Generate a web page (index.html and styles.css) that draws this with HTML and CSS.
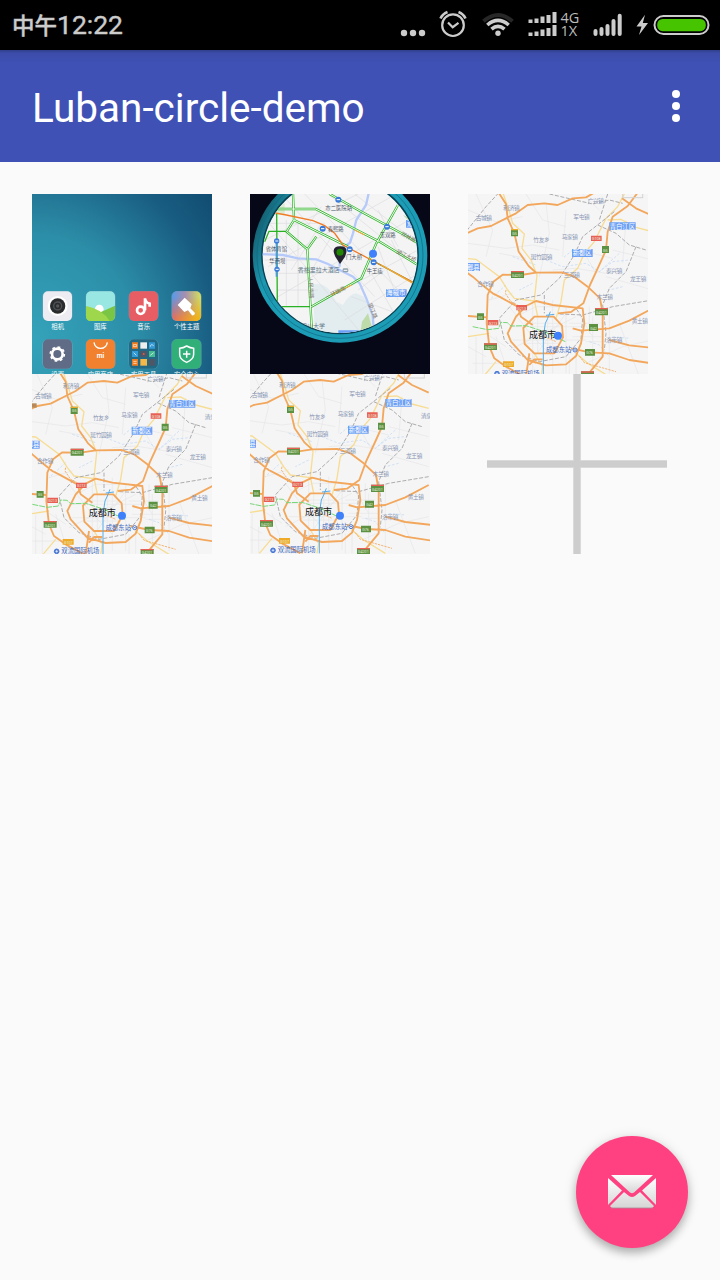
FILE: index.html
```
<!DOCTYPE html>
<html lang="zh-CN">
<head>
<meta charset="utf-8">
<title>Luban-circle-demo</title>
<link rel="stylesheet" href="styles.css">
</head>
<body>
<svg class="defs" width="0" height="0" aria-hidden="true">
  <defs>
    <g id="city">
      <g class="street">
        <path d="M6 60L90 95 170 80M30 12L80 120 60 200M180 12L230 90 300 110M240 40L250 130 220 260M300 60L290 200M6 160L120 175 200 165 280 180M260 240L330 235 420 250M440 180L560 210M480 90L470 220M420 260L560 300M70 330L140 310M60 430L120 470M6 470L60 500M20 520H120M30 440V560M50 480V560M90 440L130 560M130 350L200 440 260 500M130 480L330 380M170 550L300 370M130 410H350M200 330V550M260 330V550M300 350V550M140 450H360M380 380V550M430 350V550M360 520L470 470 560 450M460 400L520 560M400 60L350 12M380 190L440 205M350 180L390 250M100 190L180 205M310 400H400M320 440H410M340 375L380 440"/>
        <path d="M215 380V490M245 380V490M175 400H285M175 460H285M150 380L210 350 310 350M145 470L190 520M310 500V560M330 490V560M360 455H410M370 350V430"/>
      </g>
      <g class="river"><path d="M240 210L290 230 360 220 400 245 440 215 490 210M120 285L70 330M140 200L210 225M470 290L430 300M370 455L400 465 430 500M440 440L490 445M320 180L290 205M200 280L160 300M460 190L400 245"/></g>
      <g class="yellow">
        <path d="M-8 205L30 208 60 230 100 260 125 300 145 325 205 333M112 12L130 65 140 100 175 132 168 175 195 210 213 255 205 330 215 380M475 12L455 50 420 85 400 125 385 155 355 190 335 235 295 270 285 335 270 385M425 90L465 88 510 112 560 125M6 440L70 430M345 460L330 490 365 520 430 560M52 560L90 515M205 490L230 530 225 560M180 505L210 520"/>
      </g>
      <g class="rail">
        <path d="M-8 135L60 50 95 12M250 12L380 42 430 30 470 40M445 65L350 140 325 195 280 265 225 315 150 330 100 385 115 450 160 495 220 515 300 500 345 445 350 385 330 355M395 105L450 130 490 165 540 180M510 170L480 245 430 295 410 345 420 430 415 480M560 330L440 350 350 375 280 372M235 315V370M425 12L400 90"/>
      </g>
      <g class="road">
        <path d="M-8 135L35 115 75 108 120 85 150 70 185 45 235 40 275 45 320 25 360 22 385 8M98 8L120 42 125 85 145 130 158 185 188 228 210 248M515 8L485 48 440 80 425 125 420 180 402 220 372 285 352 340 315 366 276 370M468 25L510 55 560 78"/>
        <path d="M210 248L165 255 110 254 82 275 65 315 62 400 70 470 85 505 120 530 175 560M210 248L288 247 325 260 365 290 402 325 410 370 410 500 360 560M-8 240L20 260 50 286 80 310 100 320 155 350 165 380 200 405M-8 377L62 382M320 415L345 422 430 415 490 392 560 355M315 475L372 487 430 490 490 510 570 522M430 450L490 466 570 475"/>
        <path d="M210 333L260 345 350 355 355 400 345 460 330 498 300 523 240 526 185 510 135 455 125 430 150 380 180 348ZM205 380H263L288 407 291 442 265 490H205L176 462 172 414ZM190 490L180 560M190 525L205 508H230"/>
        <path class="dash" d="M120 300L118 310 135 335 155 345M235 440L270 455M340 498L355 518 450 545"/>
      </g>
      <path class="green" d="M20 410L65 419 98 415 105 397 124 398 135 408 180 407 235 425 298 455"/>
      <path class="blue" d="M232 440V560M232 440L238 400 245 385 253 365M240 376L265 373"/>
      <g class="place">
        <text x="365" y="39">广兴镇</text><text x="112" y="60">利济镇</text><text x="29" y="90">古城镇</text><text x="322" y="87">军屯镇</text><text x="202" y="156">竹友乡</text><text x="287" y="148">马家镇</text><text x="194" y="208">斑竹园镇</text><text x="293" y="260">三河镇</text><text x="420" y="250">泰兴镇</text><text x="492" y="273">龙王镇</text><text x="392" y="327">木兰镇</text><text x="34" y="287">合作镇</text><text x="497" y="398">黄土镇</text><text x="420" y="456">洛带镇</text>
      </g>
      <g class="district">
        <path d="M430 97h79v23h-79zM318 177h62v24h-62zM-16 219h58v24h-58z"/>
        <text x="431" y="116">青白江区</text><text x="320" y="196">新都区</text><text x="3" y="239">郫县</text>
      </g>
      <g class="g-sign">
        <path d="M135 117h21v22h-21zM408 168h21v21h-21zM135 243h39v21h-39zM387 354h39v22h-39zM33 370h21v20H33zM54 460h39v20H54zM369 402h27v21h-27zM357 477h30v20h-30zM345 544h39v22h-39z"/>
        <path class="red" d="M135 243h39v4h-39zM387 354h39v4h-39zM54 460h39v4H54zM345 544h39v4h-39zM375 137h32v16h-32zM151 345h32v16h-32zM65 390h32v16H65z"/>
        <path class="amber" d="M111 514h33v17h-33zM135 117h21v4h-21z"/>
        <text x="139" y="134">G5</text><text x="411" y="185">G5</text><text x="138" y="260">G4201</text><text x="390" y="372">G4201</text><text x="36" y="386">G5</text><text x="57" y="477">G4201</text><text x="373" y="419">G42</text><text x="361" y="493">G76</text><text x="348" y="560">G4201</text><text x="378" y="151">G108</text><text x="154" y="359">G213</text><text x="68" y="404">G213</text><text x="115" y="528">G107</text>
      </g>
      <g class="station">
        <text x="240" y="486">成都东站</text><circle cx="327" cy="480" r="6"/><path d="M324 480h6"/>
        <text x="107" y="557">双流国际机场</text><circle class="fill" cx="93" cy="551" r="7"/><path class="white" d="M93 547v8M89 551h8"/>
      </g>
      <text class="capital" x="189" y="445">成都市</text>
    </g>
    <linearGradient id="paper" x2="0" y2="1"><stop stop-color="#fff"/><stop offset="1" stop-color="#d5d5d5"/></linearGradient>
    <linearGradient id="theme"><stop stop-color="#579be9"/><stop offset=".45" stop-color="#a58eb0"/><stop offset="1" stop-color="#d5df5c"/></linearGradient>
    <linearGradient id="themeWarm" x2="1" y2=".2"><stop stop-color="#d95e76"/><stop offset="1" stop-color="#efb31a"/></linearGradient>
    <linearGradient id="fadeDown" x2="0" y2="1"><stop offset=".2" stop-color="#000"/><stop offset=".9" stop-color="#fff"/></linearGradient>
    <mask id="warmMask"><rect x="425" y="303" width="90" height="90" fill="url(#fadeDown)"/></mask>
    <clipPath id="lens"><circle cx="276" cy="197" r="232"/></clipPath>
    <linearGradient id="rim" x1="0" y1="0" x2=".7" y2=".3"><stop stop-color="#06242f"/><stop offset=".2" stop-color="#176d80"/><stop offset=".4" stop-color="#1d9cb5"/></linearGradient>
  </defs>
</svg>

<header class="status">
  <div class="clock"><span class="noon">中午</span>12:22</div>
  <div class="indicators">
    <svg class="more" width="26" height="50" viewBox="400 0 26 50"><g fill="#ccc"><circle cx="404" cy="33" r="3.2"/><circle cx="413" cy="33" r="3.2"/><circle cx="422" cy="33" r="3.2"/></g></svg>
    <svg class="alarm" width="28" height="50" viewBox="438.500 0 28 50" fill="none" stroke="#ccc" stroke-width="2.200"><circle cx="452.500" cy="25.200" r="10.800"/><path d="M447.500 22.500L452.200 27.200 458 22.800"/><path d="M440 18.500Q442 14 447 12M465 18.500Q463 14 458 12" stroke-width="2.600"/></svg>
    <svg class="wifi" width="32" height="50" viewBox="481.500 0 32 50" fill="none" stroke="#ccc" stroke-width="3.600"><path d="M483 21.300Q497.500 8.700 512 21.300" stroke="#272727" stroke-width="4"/><path d="M486.800 25Q497.500 15.800 508.200 25M491 29.200Q497.500 23.400 504 29.200"/><circle cx="497.500" cy="33.200" r="2.700" fill="#ccc" stroke="none"/></svg>
    <svg class="net" width="52" height="50" viewBox="527.500 0 52 50"><g stroke="#ccc" stroke-width="4"><path d="M530 19.500V23M536 18.500V23M542 16.500V23M548 15V23M554 12V23M530 32.500V36M536 31.500V36M542 29.500V36M548 28V36M554 25V36"/></g><text x="560" y="23">4G</text><text x="560" y="36">1X</text></svg>
    <svg class="signal" width="29" height="50" viewBox="592.500 0 29 50"><path d="M595 31v3M601 29v5M607 26v8M613 21v13M619.200 15.800V34" stroke="#ccc" stroke-width="4" stroke-linecap="round"/></svg>
    <svg class="power" width="74" height="50" viewBox="635.500 0 74 50"><path d="M644.500 14.800L636 26.500h5L638.500 35 647.500 23h-5.200z" fill="#ccc"/><rect x="654" y="16" width="54" height="18" rx="9" fill="none" stroke="#ccc" stroke-width="2"/><rect x="656.700" y="19" width="48.600" height="12.200" rx="5.500" fill="#47c400"/></svg>
  </div>
</header>

<div class="toolbar">
  <h1>Luban-circle-demo</h1>
  <svg class="menu" width="8" height="34" viewBox="0 0 8 34" fill="#fff"><circle cx="4" cy="5" r="4"/><circle cx="4" cy="17" r="4"/><circle cx="4" cy="29" r="4"/></svg>
</div>

<main class="gallery">
  <div class="tile home">
    <svg viewBox="6 12 540 540">
      <g class="app-frame"><rect x="37" y="303" width="91" height="90" rx="17"/><rect x="167" y="303" width="90" height="90" rx="17"/><rect x="296" y="303" width="90" height="90" rx="17"/><rect x="424" y="303" width="91" height="90" rx="17"/></g>
      <rect x="39" y="304" width="87" height="89" rx="15" fill="#ececf2"/><circle cx="83" cy="348" r="30" fill="#fff"/><circle cx="83" cy="348" r="23" fill="#292b2e"/><circle cx="83" cy="348" r="12" fill="none" stroke="#505254" stroke-width="4"/><circle cx="83" cy="348" r="5" fill="#555"/>
      <rect x="168" y="304" width="87" height="89" rx="15" fill="#98e7e3"/><circle cx="208" cy="357" r="13" fill="#fff"/><path d="M208 368L255 347V378Q255 393 240 393H183Q168 393 168 378V350Z" fill="#7ac543"/><path d="M168 348Q219 358 239 393H183Q168 393 168 378Z" fill="#9ed64c"/>
      <rect x="297" y="304" width="87" height="89" rx="15" fill="#e65d63"/><g fill="none" stroke="#fff" stroke-width="8"><circle cx="332" cy="361" r="11"/><path d="M345 361V325Q347 338 359 341V350"/></g>
      <rect x="426" y="304" width="87" height="89" rx="15" fill="url(#theme)"/><rect x="426" y="304" width="87" height="89" rx="15" fill="url(#themeWarm)" mask="url(#warmMask)"/><path d="M443 345L464 323 485 343 481 355 495 369Q494 378 486 376L474 361 463 366Z" fill="#fff"/>
      <g class="app-frame"><rect x="37" y="447" width="91" height="90" rx="17"/><rect x="167" y="447" width="90" height="90" rx="17"/><rect x="296" y="447" width="90" height="90" rx="17"/><rect x="424" y="447" width="91" height="90" rx="17"/></g>
      <rect x="39" y="448" width="87" height="88" rx="15" fill="#606b86"/><circle cx="82" cy="492" r="16" fill="none" stroke="#fff" stroke-width="8"/><circle cx="82" cy="492" r="21" fill="none" stroke="#fff" stroke-width="5" stroke-dasharray="8.250 8.250"/>
      <rect x="168" y="448" width="87" height="88" rx="15" fill="#f1802f"/><path d="M192 457Q195 475 212 475T232 457" fill="none" stroke="#fff" stroke-width="4"/><text class="mi" x="200" y="503">mi</text>
      <rect x="297" y="448" width="87" height="88" rx="15" fill="#216984"/>
      <path fill="#ef7c20" d="M306 457h18v19h-18zM306 507h18v20h-18z"/><path fill="#eee" d="M331 457h20v19h-20z"/><path fill="#339bd8" d="M357 457h18v19h-18zM306 483h18v18h-18z"/><path fill="#4f5666" d="M331 483h20v18h-20zM357 507h18v20h-18z"/><path fill="#47bb92" d="M357 483h18v18h-18z"/><path fill="#f5b848" d="M331 507h20v20h-20z"/>
      <path d="M310 464h10v6h-10zM361 470q1-10 10-3M310 514h10M310 520h10M311 488l8 8M361 496l10-8" fill="none" stroke="#fff" stroke-width="2"/><circle cx="341" cy="492" r="3" fill="#df5a4b"/>
      <rect x="426" y="448" width="87" height="88" rx="15" fill="#31af79"/><path d="M470 468Q481 474 491 475V493Q491 509 470 517 449 509 449 493V475Q460 474 470 468ZM470 482V503M459 492H481" fill="none" stroke="#fff" stroke-width="4.500"/>
      <g class="app-name"><text x="83" y="417">相机</text><text x="211" y="417">图库</text><text x="341" y="417">音乐</text><text x="470" y="417">个性主题</text><text x="83" y="560">设置</text><text x="211" y="560">应用商店</text><text x="341" y="560">实用工具</text><text x="470" y="560">安全中心</text></g>
    </svg>
  </div>

  <div class="tile lens">
    <svg viewBox="6 12 540 540">
      <circle cx="276" cy="196" r="246" fill="#f4f4f4" stroke="url(#rim)" stroke-width="32"/>
      <circle cx="276" cy="196" r="249" fill="none" stroke="#0f6580" stroke-width="2"/><circle cx="276" cy="196" r="234" fill="none" stroke="#094153" stroke-width="5"/>
      <path d="M50 285A244 244 0 0 0 75 333" fill="none" stroke="#1b8fa8" stroke-width="7"/>
      <g clip-path="url(#lens)">
        <rect x="40" y="0" width="480" height="440" fill="#f4f4f5"/>
        <path d="M195 283Q220 275 245 300L265 335 285 345Q305 310 325 310L348 320 372 370 378 430H200Z" fill="#e3ecef"/>
        <path d="M337 430L342 395 360 370 377 430ZM465 75L510 95 500 110Z" fill="#bddcaa"/><path d="M80 40h30v35H80z" fill="#dceacf"/>
        <g fill="none" stroke="#dcdce0" stroke-width="2"><path d="M50 150L330 12M60 230L430 20M90 320L500 80M200 345L510 180M290 390L510 250M100 12L380 320M170 12L500 350M240 12L510 230M320 12L510 160M30 60L340 430M50 210H180M80 250H220M90 300H210M115 90V350M150 100V350M60 100H230M220 100L130 240M250 140L180 260M390 170L450 330M430 150L490 270M370 250L450 390M310 320L500 390M390 60L450 170M220 50L170 120M330 300L410 240"/></g>
        <path d="M30 192L105 195 150 205 205 208 240 222 275 240 315 260 335 280 355 325 374 375 378 430M362 10L354 45 325 90 315 130 306 158 275 180V230" fill="none" stroke="#b6cafa" stroke-width="7"/>
        <path d="M85 57H203L395 155 510 225M135 12L138 90 300 170M138 90L116 125 178 178 205 140M450 45L385 160 340 265 190 350M178 178L192 430M245 12L340 65 470 135 510 160" fill="none" stroke="#29b324" stroke-width="7"/>
        <path d="M50 155L63 124H116M86 70L88 350H190M370 210L500 280" fill="none" stroke="#29b324" stroke-width="4"/>
        <path d="M85 57H203L395 155 510 225M135 12L138 90 300 170M138 90L116 125 178 178 205 140M450 45L385 160 340 265 190 350M178 178L192 430M245 12L340 65 470 135 510 160" fill="none" stroke="#f8fff5" stroke-width="3"/>
        <path d="M86 150V260" stroke="#4b9bd8" stroke-width="6"/><path d="M60 65L115 75 195 92 230 107 260 130 285 165 370 210 510 285" fill="none" stroke="#f17b25" stroke-width="4"/><path d="M320 120L350 135M250 315L310 285M400 225L500 283" stroke="#edab3b" stroke-width="4"/>
        <g class="poi"><text x="232" y="59">市二医院站</text><text x="239" y="122">春熙路</text><text x="395" y="140">玉双路</text><text x="53" y="182">省体育馆</text><text x="64" y="218">华西坝</text><text x="294" y="208">门大桥</text><text x="356" y="248">牛王庙</text><text class="hotel" x="149" y="247">香格里拉大酒店</text><text class="hotel" x="159" y="413">四川大学</text><g class="street-name"><text transform="translate(181 262) rotate(86)">人民南路</text><text transform="translate(237 327) rotate(-27)">一环路南</text><text transform="translate(458 135) rotate(28)">双林路</text><text transform="translate(444 188) rotate(26)">望江大桥</text><text transform="translate(360 342) rotate(68)">望江路</text></g></g>
        <g class="district"><path d="M414 298h62v23h-62zM474 90h36v23h-36zM271 421h64v20h-64z"/><text x="415" y="316">海椒市</text><text x="477" y="108">双</text></g>
        <g fill="#397bd9"><circle cx="271" cy="29" r="9"/><circle cx="224" cy="116" r="9"/><circle cx="417" cy="110" r="9"/><circle cx="305" cy="178" r="9"/><circle cx="377" cy="217" r="9"/><circle cx="86" cy="153" r="8"/><circle cx="87" cy="238" r="8"/></g><path d="M266 29h10M219 116h10M412 110h10M300 178h10M372 217h10M82 153h9M83 238h9" stroke="#fff" stroke-width="3"/>
        <rect x="284" y="235" width="17" height="12" rx="4" fill="#8fa1aa"/><path d="M287 241h11" stroke="#fff" stroke-width="3"/>
      </g>
      <circle cx="375" cy="191" r="12" fill="#3e81fb"/><path d="M276 222L262 200Q247 170 276 169T291 200Z" fill="#242431"/><circle cx="276" cy="187" r="10.500" fill="#208600"/>
    </svg>
  </div>

  <div class="tile map"><svg viewBox="6 12 540 540"><use href="#city"/><rect class="scale" x="470" y="0" width="60" height="23"/><circle class="here" cx="276" cy="437" r="12"/></svg></div>
  <div class="tile map"><svg viewBox="6 6 540 540"><use href="#city" x="-13" y="-13"/><rect class="scale" x="469" y="-5" width="60" height="23"/><text class="place" x="524" y="140">清泉</text><path d="M6 94h14v13H6z" fill="#b98a57"/><circle class="here" cx="276" cy="431" r="12"/></svg></div>
  <div class="tile map"><svg viewBox="6 6 540 540"><use href="#city" x="-18" y="-16"/><rect class="scale" x="469" y="-5" width="60" height="23"/><text class="place" x="519" y="138">清泉</text><circle class="here" cx="276" cy="431" r="12"/></svg></div>
  <div class="tile add"><svg viewBox="0 0 180 180"><path d="M0 90H180M90 0V180" stroke="#dedede" stroke-width="8"/><path d="M0 90H180M90 0V180" stroke="#cdcdcd" stroke-width="6.400"/></svg></div>
</main>

<button class="fab" aria-label="发送邮件">
  <svg width="48" height="34" viewBox="0 0 48 34"><g fill="url(#paper)"><path d="M3 0H45L26 17.500Q24 19 22 17.500Z"/><path d="M0 3L14 15.500 0 30ZM48 3L34 15.500 48 30ZM16 17L21 21Q24 23 27 21L32 17 46 31Q45 33 43 33H5Q3 33 2 31Z"/></g><path d="M3 33H45" stroke="#a88b95" stroke-width=".8"/></svg>
</button>
</body>
</html>
```
FILE: styles.css
```
* { box-sizing: border-box; }
body {
  margin: 0;
  position: relative;
  height: 1280px;
  overflow: hidden;
  background: #fafafa;
  font-family: Roboto, "Noto Sans CJK SC", sans-serif;
}
svg { display: block; }
.defs { position: absolute; }

.status {
  height: 50px;
  padding: 0 10.5px 0 12px;
  background: #000;
  color: #ccc;
  display: flex;
  justify-content: space-between;
}
.clock {
  font-size: 26.5px;
  line-height: 50px;
  white-space: nowrap;
  -webkit-text-stroke: .4px #ccc;
}
.noon { font-size: 22.5px; font-weight: 500; }
.indicators { display: flex; }
.alarm { margin-left: 12.5px; }
.wifi { margin-left: 15px; }
.net { margin-left: 14px; }
.signal { margin-left: 13px; }
.power { margin-left: 14px; }
.net text { fill: #bbb; font: 14.5px "Open Sans", sans-serif; }

.toolbar {
  height: 112px;
  padding: 0 40px 0 32px;
  display: flex;
  align-items: center;
  justify-content: space-between;
  background: linear-gradient(#303e8b, #3b4ca9 3px, #3f51b5 14px);
}
.toolbar h1 {
  margin: 4px 0 0;
  color: #fff;
  font-size: 40.5px;
  font-weight: 400;
}

.gallery {
  padding: 32px 32px 0;
  display: grid;
  grid-template-columns: repeat(3, 180px);
  column-gap: 38px;
}
.tile { width: 180px; height: 180px; overflow: hidden; }
.tile svg { width: 180px; height: 180px; }
.home {
  background: radial-gradient(circle at 0 80%, #34a3ba 0, #2c8ea8 45%, rgba(27, 98, 134, .8) 80%, transparent 115%), linear-gradient(75deg, #24607f, #104b75 60%, #0c3f65);
}
.lens { background: #070817; }
.map { background: #f5f5f5; }
.add { margin-left: 19px; }

.app-frame { fill: #7ea7bd; opacity: .6; }
.app-name { fill: #fff; font: 19px "Noto Sans CJK SC", sans-serif; text-anchor: middle; }
.mi { fill: #fff; font: bold 20px Roboto, sans-serif; }

.street, .river, .yellow, .rail, .road, .green, .blue { fill: none; }
.street { stroke: #e5e5e8; stroke-width: 2; }
.river { stroke: #bed6f6; stroke-width: 2; stroke-dasharray: 8 5; }
.yellow { stroke: #f7dc94; stroke-width: 4; }
.rail { stroke: #adadb0; stroke-width: 3; stroke-dasharray: 12 5; }
.road { stroke: #f2a75c; stroke-width: 5.5; stroke-linejoin: round; }
.road .dash { stroke-width: 2.5; stroke-dasharray: 7 3; }
.green { stroke: #79d677; stroke-width: 3; stroke-dasharray: 18 3; }
.blue { stroke: #55adec; stroke-width: 3; }
.place { fill: #8694b3; font: 17px "Noto Sans CJK SC", sans-serif; letter-spacing: -1px; }
.district path { fill: #6b9ff5; }
.district text { fill: #fff; font: 19px "Noto Sans CJK SC", sans-serif; }
.g-sign path { fill: #5b9141; }
.g-sign .red { fill: #e95f55; }
.g-sign .amber { fill: #efaa28; }
.g-sign text { fill: #e7f2dd; font: 11px Roboto, sans-serif; }
.station text { fill: #4169bd; font: 19px "Noto Sans CJK SC", sans-serif; }
.station circle { fill: #fff; stroke: #4878d7; stroke-width: 3; }
.station path { fill: none; stroke: #4878d7; stroke-width: 3; }
.station .fill { fill: #4878d7; }
.station .white { stroke: #fff; stroke-width: 2; }
.capital { fill: #111; font: 27px "Noto Sans CJK SC", sans-serif; }
.here { fill: #3e81fb; }
.scale { fill: none; stroke: #d3d3d3; stroke-width: 3; }
.poi { fill: #4c5566; font: 16px "Noto Sans CJK SC", sans-serif; }
.poi .hotel { fill: #607888; font-size: 18px; }
.street-name { fill: #857a70; }

.fab {
  position: absolute;
  right: 32px;
  bottom: 32px;
  width: 112px;
  height: 112px;
  padding: 0;
  border: 0;
  border-radius: 50%;
  background: #ff4081;
  box-shadow: 0 5px 8px rgba(0, 0, 0, .24), 0 2px 14px rgba(0, 0, 0, .12);
  display: grid;
  place-items: center;
}
```
